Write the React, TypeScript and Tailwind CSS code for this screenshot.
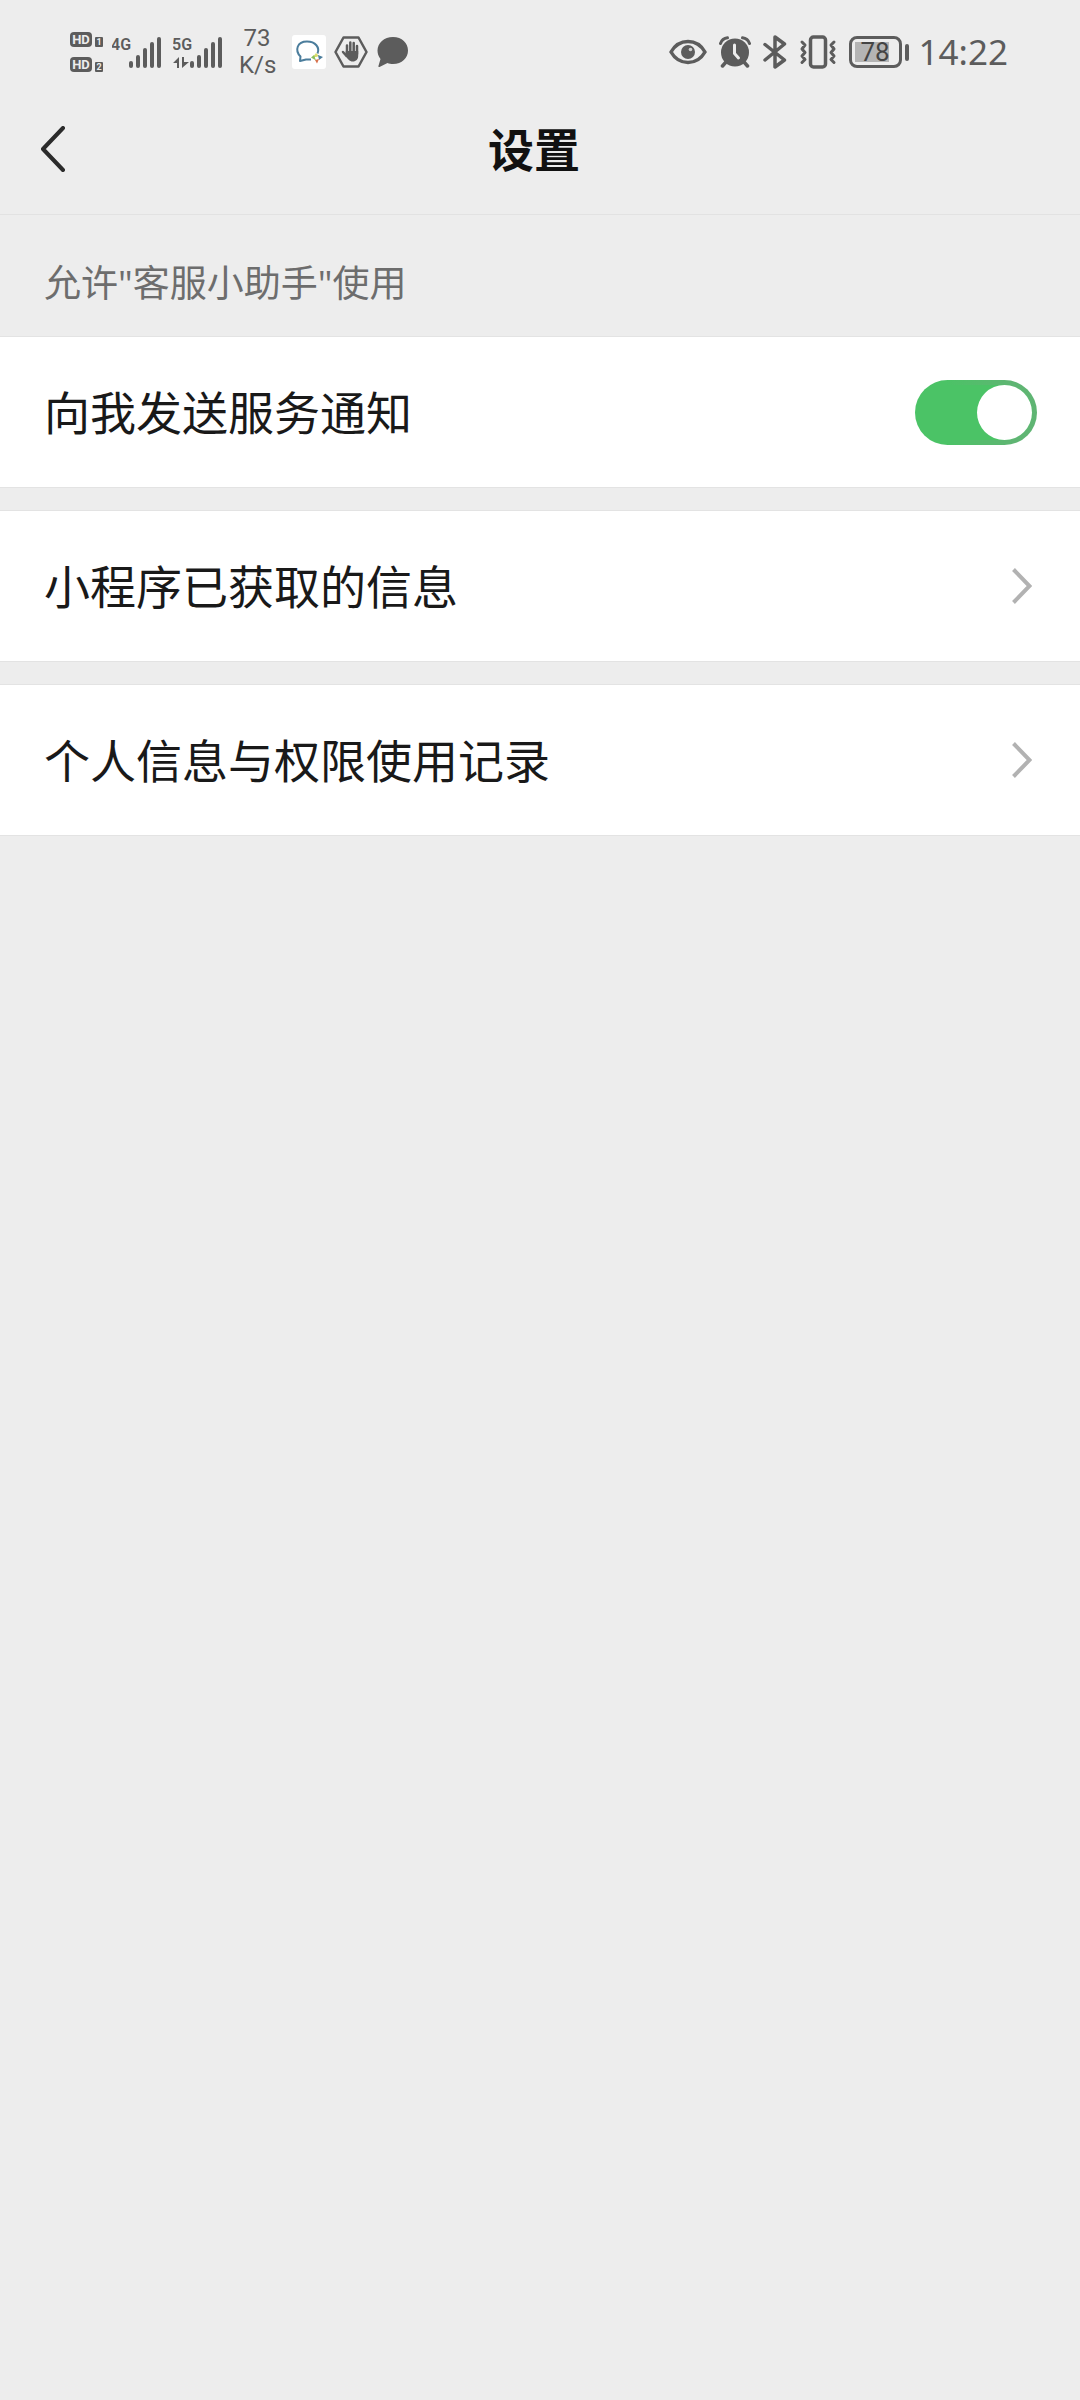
import { useState } from "react";

const ROWS = ["小程序已获取的信息", "个人信息与权限使用记录"];

const BARS = [
  { x: 0, y: 24 },
  { x: 7, y: 18 },
  { x: 14, y: 11 },
  { x: 21, y: 5 },
  { x: 28, y: 0 },
];

function HdBadge({ slot }: { slot: string }) {
  return (
    <svg width="33" height="16" viewBox="0 0 33 16" fill="#5c5c5c">
      <rect width="22" height="15" rx="4" />
      <text
        x="11"
        y="12"
        textAnchor="middle"
        fontSize="13"
        fontWeight="700"
        fill="#ededed"
        fontFamily="Roboto, sans-serif"
      >
        HD
      </text>
      <rect x="25" y="5" width="8" height="10" rx="1" />
      <text
        x="29"
        y="13"
        textAnchor="middle"
        fontSize="9"
        fontWeight="700"
        fill="#ededed"
        fontFamily="Roboto, sans-serif"
      >
        {slot}
      </text>
    </svg>
  );
}

function Signal({ label, arrows }: { label: string; arrows?: boolean }) {
  return (
    <svg width="50" height="34" viewBox="0 -2 50 34" fill="#5c5c5c">
      <text x="-1" y="13" fontSize="16" fontWeight="600" fontFamily="Roboto, sans-serif">
        {label}
      </text>
      {arrows && <path d="M0 26 6 20V31H4V26ZM9 20h2v5h5l-7 6Z" />}
      {BARS.map((b) => (
        <rect key={b.x} x={b.x + 17} y={b.y} width="4" height={31 - b.y} rx="2" />
      ))}
    </svg>
  );
}

function StatusBar() {
  return (
    <div className="flex h-[104px] items-center justify-between pr-[72px] pl-[70px] text-[#5c5c5c]">
      <div className="flex items-center">
        <div className="flex flex-col gap-[9px]">
          <HdBadge slot="1" />
          <HdBadge slot="2" />
        </div>
        <div className="ml-[9px] flex gap-[11px]">
          <Signal label="4G" />
          <Signal label="5G" arrows />
        </div>
        <div className="ml-4 w-9 text-center font-[Roboto,sans-serif] text-2xl leading-[27px]">
          <div>73</div>
          <div>K/s</div>
        </div>
        <svg className="ml-[17px]" width="34" height="34" viewBox="0 0 34 34" fill="none">
          <rect width="34" height="34" rx="3" fill="#fff" />
          <path
            d="M19 24.500H14L8 26 8.500 21.500C2.500 15.500 5 6.500 15 6.500 23.500 6.500 28 12.500 25.500 18.500"
            stroke="#4b7d9c"
            strokeWidth="2"
            strokeLinejoin="round"
          />
          <path d="M21 22 24 18 27 21 24 22Z" fill="#d9dc6a" />
          <path d="M26 20 31 22 27 25Z" fill="#4b7d9c" />
          <path d="M23 25 27 24 25 28.500Z" fill="#d8704c" />
          <path d="M19 22.500 22 20 24 25.500Z" fill="#8cbf5c" />
        </svg>
        <svg className="ml-2" width="34" height="32" viewBox="0 0 34 32" fill="none">
          <path d="M9.500 1.500h15L32.500 16l-8 14.500h-15L1.500 16Z" stroke="#5c5c5c" strokeWidth="2.500" strokeLinejoin="round" />
          <path
            d="M13 17V9.500M16.300 16V6.500M19.700 16V7M23 18V10M12.500 20 9 16"
            stroke="#5c5c5c"
            strokeWidth="2.500"
            strokeLinecap="round"
          />
          <path d="M11.800 15h12.400v5c0 3-2 5.500-5.400 5.500-3.500 0-5-2.500-7.500-6Z" fill="#5c5c5c" />
        </svg>
        <svg className="ml-[9px]" width="32" height="32" viewBox="0 0 32 32" fill="#5c5c5c">
          <path d="M16 1C25 1 31 7 31 14.500S25 28 16 28c-2 0-4-.3-5.500-1L2.500 31c-.8.300-1.300-.4-1-1.200L3.500 23C1.500 20.500.500 17.500.500 14.500.500 7 7 1 16 1Z" />
        </svg>
      </div>

      <div className="flex items-center">
        <svg width="38" height="26" viewBox="0 0 38 26" fill="none">
          <path d="M2 13C6 6 12 2.500 19 2.500S32 6 36 13C32 20 26 23.500 19 23.500S6 20 2 13Z" stroke="#5c5c5c" strokeWidth="3.500" strokeLinejoin="round" />
          <circle cx="19" cy="13" r="7" fill="#5c5c5c" />
          <circle cx="21.500" cy="10.500" r="1.800" fill="#cfcfcf" />
        </svg>
        <svg className="ml-3" width="32" height="32" viewBox="0 0 32 32" fill="none" stroke="#5c5c5c" strokeLinecap="round">
          <circle cx="16" cy="16.500" r="14" fill="#5c5c5c" stroke="none" />
          <path d="M1.500 7.500C2.500 4.500 5 2.200 8.500 1.800M23.500 1.800C27 2.200 29.500 4.500 30.500 7.500" strokeWidth="3" />
          <path d="M7 26 3.500 30M25 26 28.500 30" strokeWidth="3.500" />
          <path d="M15.500 9v8.500l4 4.500" stroke="#ededed" strokeWidth="3" />
        </svg>
        <svg className="ml-3" width="24" height="34" viewBox="0 0 24 34" fill="none" stroke="#5c5c5c" strokeWidth="3.500" strokeLinecap="round" strokeLinejoin="round">
          <path d="M2 9.500 21.500 25 12 32V2L21.500 9 2 25" />
        </svg>
        <svg className="ml-3" width="38" height="34" viewBox="0 0 38 34" fill="none" stroke="#5c5c5c" strokeWidth="3" strokeLinecap="round" strokeLinejoin="round">
          <rect x="11.500" y="2" width="15" height="30" rx="3" strokeWidth="3.500" />
          <path d="M3 7 6 10 3 14 6 17.500 3 21 6 24.500 3 27.500M35 7 32 10 35 14 32 17.500 35 21 32 24.500 35 27.500" />
        </svg>
        <div className="ml-3 flex items-center gap-[3px]">
          <div className="flex h-8 w-[53px] items-center justify-center rounded-lg border-[3px] border-[#5c5c5c] bg-[linear-gradient(90deg,#b4b4b4_34px,transparent_34px)] bg-[position:3px_3px] bg-[size:100%_20px] bg-no-repeat font-[Roboto,sans-serif] text-[26px] leading-none text-[#444]">
            78
          </div>
          <div className="h-[17px] w-1 rounded-sm bg-[#5c5c5c]" />
        </div>
        <div className="ml-[10px] pb-[2px] font-['Noto_Sans',sans-serif] text-[35px] leading-none">14:22</div>
      </div>
    </div>
  );
}

function NavBar() {
  return (
    <header className="grid h-[111px] grid-cols-[80px_1fr_92px] items-center border-b border-[#e2e2e2] pb-5">
      <button type="button" aria-label="返回" className="flex justify-end pr-[14px]">
        <svg width="26" height="46" viewBox="0 0 26 46" fill="none" stroke="#2b2b2b" strokeWidth="4" strokeLinecap="round" strokeLinejoin="round">
          <path d="M23 2 3 23 23 44" />
        </svg>
      </button>
      <h1 className="pb-1 text-center text-[46px] leading-[60px] font-bold text-[#111]">设置</h1>
    </header>
  );
}

function Chevron() {
  return (
    <svg width="20" height="38" viewBox="0 0 20 38" fill="none" stroke="#b2b2b2" strokeWidth="4">
      <path d="M1.500 2.500 17.500 19 1.500 35.500" />
    </svg>
  );
}

export default function App() {
  const [notify, setNotify] = useState(true);

  return (
    <div className="min-h-screen bg-[#ededed] font-['Noto_Sans_CJK_SC',sans-serif]">
      <StatusBar />
      <NavBar />
      <main>
        <h2 className="px-11 pt-10 pb-[26px] font-['Open_Sans','Noto_Sans_CJK_SC',sans-serif] text-[37px] leading-[56px] text-[#6d6d6d]">
          允许"客服小助手"使用
        </h2>
        <div className="flex flex-col gap-6">
          <label className="flex h-[150px] items-center justify-between bg-white pr-[43px] pl-11 text-[46px] text-[#191919] outline outline-[#e3e3e3]">
            <span className="pb-1">向我发送服务通知</span>
            <input
              type="checkbox"
              role="switch"
              checked={notify}
              onChange={(e) => setNotify(e.target.checked)}
              className="flex h-[65px] w-[122px] appearance-none items-center rounded-full border-[5px] border-transparent bg-[#c8c8c8] before:size-[55px] before:rounded-full before:bg-white checked:justify-end checked:[background:linear-gradient(#4bc366,#4bc366)_padding-box,linear-gradient(90deg,#4bc366_25%,#5fb573_80%)_border-box]"
            />
          </label>
          {ROWS.map((row) => (
            <a
              key={row}
              href="#"
              className="flex h-[150px] items-center justify-between bg-white pr-12 pl-11 text-[46px] text-[#191919] outline outline-[#e3e3e3]"
            >
              <span className="pb-1">{row}</span>
              <Chevron />
            </a>
          ))}
        </div>
      </main>
    </div>
  );
}
